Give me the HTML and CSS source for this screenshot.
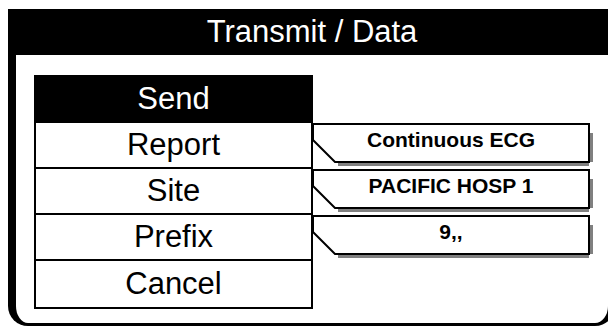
FILE: index.html
```html
<!DOCTYPE html>
<html>
  <head>
  <link rel="stylesheet" href="styles.css">
  </head>
  <body>

  <div class="screen">
  <div class="frame">
    <div class="title">Transmit / Data</div>

    <div class="content">
      <div class="row">
        <div class="btn send">Send</div>
      </div>

      <div class="row">
        <div class="btn">Report</div>
        <div class="callout">
          <svg class="shape" width="282" height="44" viewBox="0 0 282 44">
            <polygon points="26,39 281,39 281,10 277,10 277,43 26,43" fill="#808080"/>
            <polygon points="1,1 277,1 277,39 23,39 1,17" fill="#fff" stroke="#000" stroke-width="2"/>
          </svg>
          <div class="value">Continuous ECG</div>
        </div>
      </div>

      <div class="row">
        <div class="btn">Site</div>
        <div class="callout">
          <svg class="shape" width="282" height="44" viewBox="0 0 282 44">
            <polygon points="26,39 281,39 281,10 277,10 277,43 26,43" fill="#808080"/>
            <polygon points="1,1 277,1 277,39 23,39 1,17" fill="#fff" stroke="#000" stroke-width="2"/>
          </svg>
          <div class="value">PACIFIC HOSP 1</div>
        </div>
      </div>

      <div class="row">
        <div class="btn">Prefix</div>
        <div class="callout">
          <svg class="shape" width="282" height="44" viewBox="0 0 282 44">
            <polygon points="26,39 281,39 281,10 277,10 277,43 26,43" fill="#808080"/>
            <polygon points="1,1 277,1 277,39 23,39 1,17" fill="#fff" stroke="#000" stroke-width="2"/>
          </svg>
          <div class="value">9,,</div>
        </div>
      </div>

      <div class="row">
        <div class="btn last">Cancel</div>
      </div>
    </div>
  </div>
  </div>

  </body>
</html>
```

FILE: styles.css
```css
html, body {
  margin: 0;
  overflow: hidden;
  background: #fff;
}
body {
  font-family: "Liberation Sans", Arial, Helvetica, sans-serif;
  color: #000;
}
/* the device frame runs past the right edge of the shot */
.screen {
  width: 600px;
  height: 317px;
  margin: 9px 0 0 8px;
  overflow: hidden;
}
.frame {
  box-sizing: border-box;
  width: 607px;
  height: 317px;
  border-left: 8px solid #000;
  border-right: 7px solid #000;
  border-bottom: 3px solid #000;
  border-radius: 0 0 20px 20px;
}
.title {
  height: 46px;
  line-height: 46px;
  background: #000;
  color: #fff;
  font-size: 31px;
  text-align: center;
}
.content {
  padding: 20px 0 0 18px;
}
.row {
  display: flex;
  align-items: flex-start;
}
.btn {
  box-sizing: border-box;
  width: 279px;
  height: 46px;
  border: 2px solid #000;
  border-top: 0;
  font-size: 31px;
  line-height: 44px;
  text-align: center;
}
.btn.send {
  height: 48px;
  line-height: 48px;
  border: 0;
  background: #000;
  color: #fff;
}
.btn.last {
  height: 48px;
  line-height: 46px;
}
/* value box pointing back at its button */
.callout {
  position: relative;
  width: 282px;
  height: 44px;
  margin-left: -1px;
}
.shape {
  position: absolute;
  left: 0;
  top: 0;
}
.value {
  position: relative;
  width: 278px;
  padding-top: 5px;
  font-size: 21px;
  line-height: 24px;
  font-weight: bold;
  text-align: center;
}
```
